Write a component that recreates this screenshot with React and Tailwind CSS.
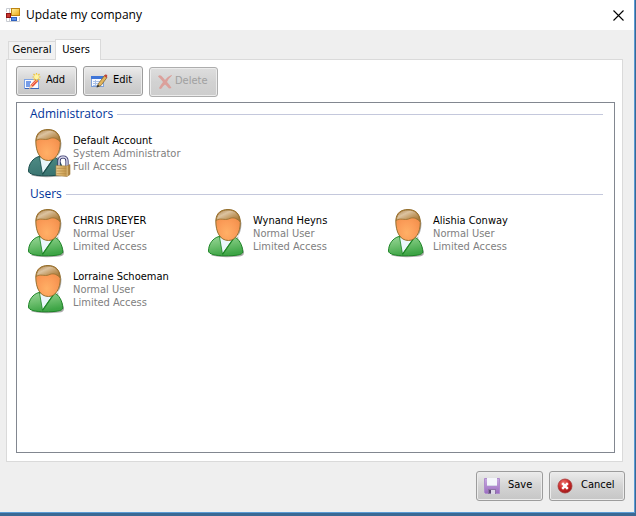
import React, { useState } from "react";

const PEOPLE = [
  { name: "CHRIS DREYER", role: "Normal User", access: "Limited Access" },
  { name: "Wynand Heyns", role: "Normal User", access: "Limited Access" },
  { name: "Alishia Conway", role: "Normal User", access: "Limited Access" },
  { name: "Lorraine Schoeman", role: "Normal User", access: "Limited Access" },
];

const ADMINS = [
  { name: "Default Account", role: "System Administrator", access: "Full Access", admin: true },
];

function Gradients() {
  return (
    <svg className="absolute h-0 w-0" aria-hidden="true">
      <defs>
        <radialGradient id="face" cx="0.45" cy="0.75" r="0.75">
          <stop offset="0" stopColor="#ffb066" />
          <stop offset="0.5" stopColor="#fb9c58" />
          <stop offset="1" stopColor="#ee8a46" />
        </radialGradient>
        <linearGradient id="hair" x1="0" y1="0" x2="1" y2="1">
          <stop offset="0" stopColor="#a87a3c" />
          <stop offset="0.35" stopColor="#dcc3a0" />
          <stop offset="0.6" stopColor="#c39c66" />
          <stop offset="1" stopColor="#9a6a28" />
        </linearGradient>
        <linearGradient id="green" x1="0" y1="0" x2="0.3" y2="1">
          <stop offset="0" stopColor="#9ad69a" />
          <stop offset="0.5" stopColor="#6fc070" />
          <stop offset="1" stopColor="#3ea546" />
        </linearGradient>
        <linearGradient id="teal" x1="0" y1="0" x2="0.3" y2="1">
          <stop offset="0" stopColor="#4f8c86" />
          <stop offset="1" stopColor="#3a7571" />
        </linearGradient>
        <linearGradient id="gold" x1="0" y1="0" x2="1" y2="1">
          <stop offset="0" stopColor="#fff3a0" />
          <stop offset="1" stopColor="#eda712" />
        </linearGradient>
        <linearGradient id="brass" x1="0" y1="0" x2="1" y2="0">
          <stop offset="0" stopColor="#ecd096" />
          <stop offset="0.5" stopColor="#d6ab60" />
          <stop offset="1" stopColor="#a87c3c" />
        </linearGradient>
        <radialGradient id="red" cx="0.4" cy="0.3" r="0.75">
          <stop offset="0" stopColor="#ee7a74" />
          <stop offset="0.55" stopColor="#cc2a2a" />
          <stop offset="1" stopColor="#941414" />
        </radialGradient>
        <linearGradient id="lilac" x1="0" y1="0" x2="0" y2="1">
          <stop offset="0" stopColor="#c9abe0" />
          <stop offset="1" stopColor="#9a6cc0" />
        </linearGradient>
      </defs>
    </svg>
  );
}

function Avatar({ admin }) {
  const edge = admin ? "#1c4f4e" : "#1d8526";
  return (
    <svg width="43" height="50" viewBox="0 0 43 50" aria-hidden="true" className="shrink-0">
      <path d="M3 47.500Q15 50.500 31 48.500Q36.500 48 36 44Q34 35 28 31Q33.500 25 33.500 15L31 8L30 36Z" fill="#000" opacity="0.32" />
      <path
        d="M11 28.500C5 30 0.500 36 0.500 43C0.500 46 7 47.800 17 47.800C27 47.800 34.800 47 34.800 44C34.500 37 31 30.500 26 29Z"
        fill={admin ? "url(#teal)" : "url(#green)"}
        stroke={edge}
      />
      <path d="M11.500 29L14.500 46L26 29.500Z" fill="#e9f6fb" stroke={edge} strokeWidth="0.8" />
      <path d="M14.500 46.500L26 30" stroke={edge} strokeWidth="1.200" />
      <path
        d="M7.800 13C8 5 13 1.500 20 1.500C27.500 1.500 32.300 6 32.300 14.500C32.300 24 28 32.500 20.500 32.500C12 32.500 7.800 24 7.800 13Z"
        fill="url(#face)"
        stroke="#94702e"
      />
      <path
        d="M8.300 12.500C9 4.500 13.500 2 20 2C27 2 31.500 5.500 31.800 13.500C28 9.500 24.500 9 20.500 11C16.500 12.500 12 9.500 8.300 12.500Z"
        fill="url(#hair)"
        stroke="#94702e"
        strokeWidth="0.8"
      />
      {admin && (
        <g>
          <path d="M31 38V33Q31 29 35 29Q39 29 39 33V39" fill="none" stroke="#35356b" strokeWidth="3.200" />
          <path d="M31 38V33Q31 29 35 29Q39 29 39 33V39" fill="none" stroke="#d8d8ea" strokeWidth="1.500" />
          <path d="M28 37.500L39 38L42 36.500V46.500L39 48.500L28 47.500Z" fill="url(#brass)" stroke="#a07c40" strokeWidth="0.600" />
          <path d="M28.500 40.300H39M28.500 43H39M28.500 45.700H39" stroke="#b48c48" strokeWidth="0.800" />
          <path d="M39.200 38V48" stroke="#f0d79a" strokeWidth="0.700" />
        </g>
      )}
    </svg>
  );
}

function AppIcon() {
  return (
    <svg width="14" height="14" viewBox="0 0 14 14" aria-hidden="true">
      <path d="M0.500 0.500H5M0.500 4V0.500M3.500 1V5M0.500 10V13.500H13.500V9M3.500 10V13" fill="none" stroke="#c9ccd2" />
      <rect x="5.500" y="0.500" width="8" height="7" fill="url(#gold)" stroke="#bd8412" />
      <rect x="0.500" y="5.500" width="4" height="4" fill="#c8362e" stroke="#8e1414" />
      <rect x="5.500" y="9.500" width="5" height="3" fill="#5d93ea" stroke="#2f62c0" />
    </svg>
  );
}

function AddIcon() {
  return (
    <svg width="17" height="17" viewBox="0 0 17 17" aria-hidden="true">
      <rect x="0.500" y="6.500" width="14" height="9" fill="#f7faff" stroke="#7fa4e4" />
      <path d="M1 15.500H15" stroke="#3c66b8" />
      <path d="M2 9H7M2 11H6M2 13H6" stroke="#4d7fe0" strokeWidth="1.300" />
      <path d="M5.500 15.500L6.500 12L12 6L14.500 8L9 13.800Z" fill="#e8543a" />
      <path d="M7.500 12.500L12.500 7.300" stroke="#ffa48c" />
      <path d="M5 16L6.500 12L9 14Z" fill="#f2cfa0" />
      <path d="M12.500 0V8.500M8.500 4H16.500M9.500 1L15.500 7M15.500 1L9.500 7" stroke="#f0c338" strokeWidth="1.200" />
      <circle cx="12.500" cy="4" r="2.400" fill="#fff5a0" />
    </svg>
  );
}

function EditIcon() {
  return (
    <svg width="17" height="17" viewBox="0 0 17 17" aria-hidden="true">
      <rect x="0.500" y="3.500" width="12" height="10" fill="#f7faff" stroke="#7ea0d8" />
      <rect x="0" y="3" width="13" height="3" fill="#3f76d8" />
      <path d="M2 8.500H9M2 10.500H8M2 12.500H6M4.500 7V13" stroke="#a9c1ea" />
      <path d="M6 14L7.500 10.500L13.500 2.500L16 4.500L10 12.500Z" fill="#e2b45c" stroke="#79602c" strokeWidth="0.700" />
      <path d="M13 3L14.300 1.500Q15.500 1 16.300 2.500L15.800 5Z" fill="#c0463a" />
      <path d="M5.500 14.500L6.800 11.500L8.500 13.200Z" fill="#333" />
    </svg>
  );
}

function DeleteIcon() {
  return (
    <svg width="16" height="16" viewBox="0 0 16 16" aria-hidden="true">
      <path
        d="M1 2.500Q2.500 0.500 4.500 2Q6.500 4 8 6Q10.500 2.500 14.500 1Q15.500 1.300 14.500 2Q11.500 4.500 10 8Q12.500 10.500 14.500 14Q12 15 11 13.500Q9.500 11.500 8 10.500Q6 12 4.500 14.500Q3 15.500 2 14Q4 10.500 6 8Q4 5 1 2.500Z"
        fill="#dba09b"
      />
    </svg>
  );
}

function SaveIcon() {
  return (
    <svg width="16" height="16" viewBox="0 0 16 16" aria-hidden="true">
      <path d="M0.500 0.500H15.500V15.500H1.500L0.500 14.500Z" fill="url(#lilac)" stroke="#ae8ccc" />
      <rect x="3" y="0" width="10" height="8" fill="#f4f6fb" />
      <path d="M3 7.500H13" stroke="#d5d8e8" />
      <rect x="4" y="11" width="8" height="5" fill="#8c74a4" />
      <rect x="7" y="12" width="4" height="4" fill="#dcd8e6" />
      <rect x="5" y="12" width="2" height="3" fill="#5c4a74" />
    </svg>
  );
}

function CancelIcon() {
  return (
    <svg width="16" height="16" viewBox="0 0 16 16" aria-hidden="true">
      <circle cx="8" cy="8" r="7" fill="url(#red)" stroke="#a83a3a" strokeWidth="0.800" />
      <path d="M5.200 5.200L10.800 10.800M10.800 5.200L5.200 10.800" stroke="#fff" strokeWidth="2.400" />
    </svg>
  );
}

function PushButton({ icon, label, className = "", disabled }) {
  return (
    <button
      type="button"
      disabled={disabled}
      className={`flex h-[30px] items-center rounded-[3px] border border-[#9c9c9c] bg-linear-to-b from-[#ececec] via-[#d4d4d4] to-[#c6c6c6] pl-[7px] text-black inset-ring inset-ring-[#ececec] disabled:border-[#adadad] disabled:from-[#dedede] disabled:via-[#d2d2d2] disabled:to-[#cdcdcd] disabled:text-[#a0a0a0] ${className}`}
    >
      {icon}
      <span className="pb-[2px]">{label}</span>
    </button>
  );
}

function Group({ title, people, columns }) {
  return (
    <section>
      <h2 className="flex h-6 items-center gap-1 pr-[11px] pb-[2px] pl-[13px] font-[family-name:'Open_Sans','Noto_Sans',sans-serif] text-[12px] text-[#003399]">
        {title}
        <span className="h-px flex-1 bg-[#c4c8dc]" />
      </h2>
      <ul className={columns}>
        {people.map((p) => (
          <li key={p.name} className="flex h-14 gap-[2px] pt-px pl-[11px]">
            <Avatar admin={p.admin} />
            <div className="pt-[6px] leading-[13px] whitespace-nowrap text-[#808080]">
              <p className="text-black">{p.name}</p>
              <p>{p.role}</p>
              <p>{p.access}</p>
            </div>
          </li>
        ))}
      </ul>
    </section>
  );
}

export default function App() {
  const [tab] = useState("users");
  return (
    <div className="flex min-h-screen flex-col border-r border-b-3 border-[#3a6994] bg-[#3a6994] font-[family-name:'DejaVu_Sans_Condensed','Noto_Sans',sans-serif] text-[11px] text-black">
      <Gradients />
      <div className="flex flex-1 flex-col border-r border-b border-[#5b9bd5] bg-[#efefef]">
        <header className="flex h-[30px] items-center gap-[6px] bg-white pr-[10px] pl-[6px] font-[family-name:'Open_Sans','Noto_Sans',sans-serif] text-[12px]">
          <AppIcon />
          <h1 className="flex-1">Update my company</h1>
          <button type="button" aria-label="Close">
            <svg width="11" height="11" viewBox="0 0 11 11" aria-hidden="true">
              <path d="M0.500 0.500L10.500 10.500M10.500 0.500L0.500 10.500" stroke="#000" strokeWidth="1.100" />
            </svg>
          </button>
        </header>

        <div role="tablist" className="flex items-end pt-[9px] pl-2">
          <button type="button" role="tab" aria-selected={tab === "general"} className="h-[18px] w-[47px] border border-r-0 border-b-0 border-[#dadada] bg-[#f1f1f1]">
            General
          </button>
          <button type="button" role="tab" aria-selected={tab === "users"} className="relative z-10 -mb-px h-[21px] w-[46px] border border-b-0 border-[#dadada] bg-white pr-1">
            Users
          </button>
        </div>

        <main role="tabpanel" className="mr-[11px] ml-[6px] flex flex-1 flex-col border border-[#dadada] bg-white px-[7px] pt-[6px] pb-2 pl-[9px]">
          <div className="flex gap-[6px] pb-[5px]">
            <PushButton icon={<AddIcon />} label="Add" className="w-[61px] gap-[5px]" />
            <PushButton icon={<EditIcon />} label="Edit" className="w-[60px] gap-[5px]" />
            <PushButton icon={<DeleteIcon />} label="Delete" className="mt-px w-[69px] gap-[2px]" disabled />
          </div>
          <div className="flex-1 border border-[#828790] bg-white">
            <Group title="Administrators" people={ADMINS} columns="grid" />
            <Group title="Users" people={PEOPLE} columns="grid grid-cols-[repeat(auto-fill,180px)]" />
          </div>
        </main>

        <footer className="flex justify-end gap-[6px] pt-[9px] pr-[9px] pb-[11px]">
          <PushButton icon={<SaveIcon />} label="Save" className="w-[67px] gap-2" />
          <PushButton icon={<CancelIcon />} label="Cancel" className="w-[76px] gap-2" />
        </footer>
      </div>
    </div>
  );
}
